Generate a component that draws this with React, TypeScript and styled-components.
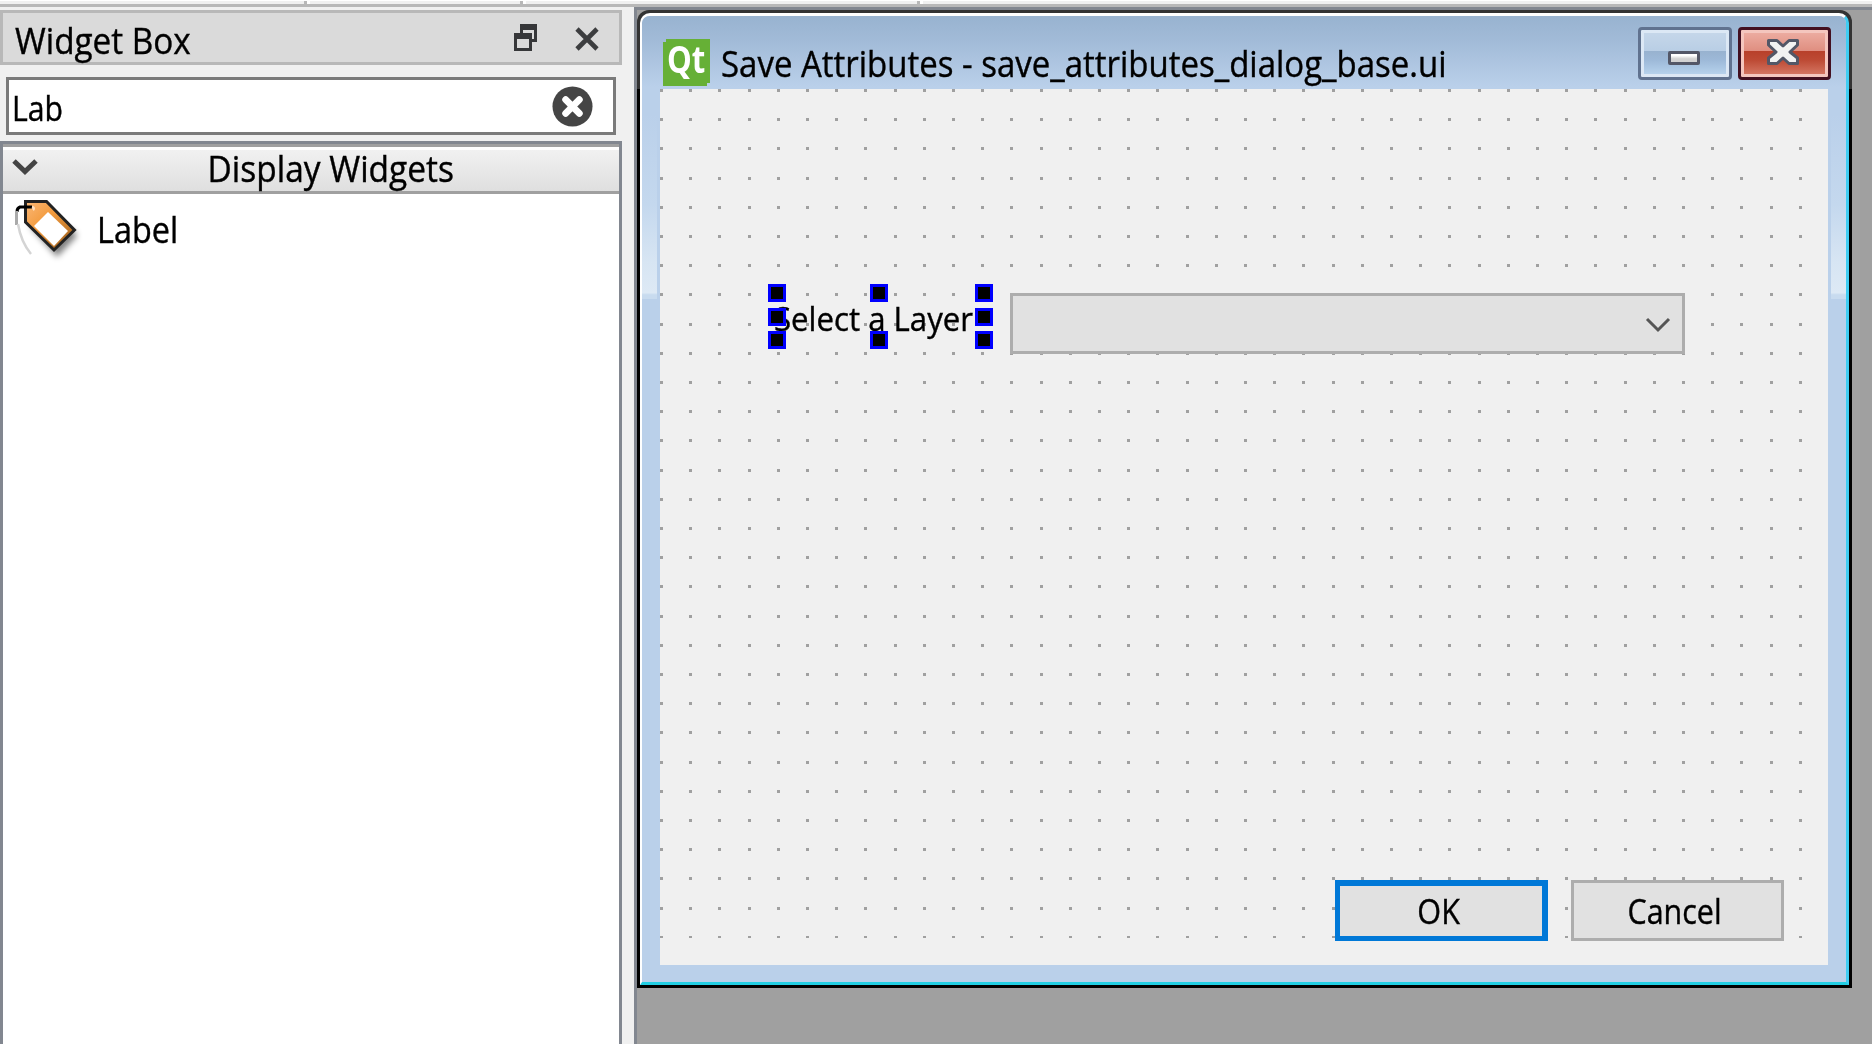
import React from 'react';
import styled, { createGlobalStyle } from 'styled-components';

const Global = createGlobalStyle`
  *, *::before, *::after { box-sizing: border-box; }
  html, body { margin: 0; padding: 0; overflow: hidden; }
  body { background: #f0f0f0; color: #000; font-family: "Open Sans", "Noto Sans", sans-serif; }
  svg { display: block; flex: none; }
`;

const Screen = styled.div`
  width: 1872px;
  height: 1044px;
  display: flex;
  flex-direction: column;
  overflow: hidden;
  background: #f0f0f0;
`;

const ToolbarEdge = styled.div`
  height: 7px;
  flex: none;
  display: flex;
  border-top: 1px solid #fff;
  border-bottom: 3px solid #b8b8b8;
`;

const ToolbarCell = styled.div<{ $w: number }>`
  width: ${(p) => p.$w}px;
  border-right: 3px solid #b8b8b8;
  box-shadow: 3px 0 0 #fff;
`;

const Body = styled.div`
  flex: 1;
  min-height: 0;
  display: flex;
  gap: 12px;
`;

const Dock = styled.aside`
  width: 622px;
  flex: none;
  display: flex;
  flex-direction: column;
  padding-top: 3px;
`;

const Text = styled.span<{ $size: number; $scale?: number; $origin?: string }>`
  display: block;
  white-space: nowrap;
  font-size: ${(p) => p.$size}px;
  line-height: 40px;
  -webkit-text-stroke: 0.4px #000;
  transform: scaleX(${(p) => p.$scale ?? 1});
  transform-origin: ${(p) => p.$origin ?? 'left'} center;
`;

const DockTitle = styled.div`
  height: 55px;
  flex: none;
  display: flex;
  align-items: flex-start;
  justify-content: space-between;
  border: 3px solid #b8b8b8;
  background: #dadada;
  padding: 8px 20px 0 12px;
`;

const DockActions = styled.div`
  display: flex;
  gap: 38px;
  padding-top: 3px;
`;

const Filter = styled.div`
  height: 58px;
  flex: none;
  margin: 12px 6px 6px;
  display: flex;
  align-items: flex-start;
  justify-content: space-between;
  border: 3px solid #7a7a7a;
  background: #fff;
  padding: 6px 20px 0 3px;
`;

const FilterText = styled.div`
  padding-top: 2px;
`;

const WidgetList = styled.div`
  flex: 1;
  display: flex;
  flex-direction: column;
  border: 3px solid #828790;
  border-bottom: 0;
  background: #fff;
`;

const Category = styled.div`
  height: 50px;
  flex: none;
  display: flex;
  align-items: flex-start;
  border-top: 3px solid #a0a0a0;
  border-bottom: 3px solid #a0a0a0;
  background: linear-gradient(#fff 3px, #f1f1f1 3px, #dfdfdf);
  padding: 0 165px 0 9px;
`;

const CategoryName = styled.div`
  flex: 1;
  display: flex;
  justify-content: flex-end;
  padding-top: 2px;
`;

const Item = styled.div`
  display: flex;
  align-items: flex-start;
  gap: 10px;
  padding: 6px 0 0 12px;
`;

const ItemName = styled.div`
  padding-top: 10px;
`;

const Workspace = styled.main`
  flex: 1;
  min-width: 0;
  border-top: 3px solid #828790;
  border-left: 3px solid #828790;
  background: #a0a0a0;
`;

const Window = styled.section`
  width: 1215px;
  height: 978px;
  display: flex;
  flex-direction: column;
  background: linear-gradient(#333 79px, #000 79px);
  border-radius: 12px 12px 0 0;
  padding: 3px;
`;

const Frame = styled.div`
  flex: 1;
  display: flex;
  flex-direction: column;
  overflow: hidden;
  border-radius: 10px 10px 0 0;
  background: #bad0ea;
  border-style: solid;
  border-width: 3px 3px 3px 2px;
  border-color: #fff #3fcdf3 #22cfe4 #fff;
`;

const TitleBar = styled.header`
  height: 73px;
  flex: none;
  display: flex;
  align-items: flex-start;
  background: linear-gradient(#98b3d0, #a2bbd8 35%, #bad0ea 97%);
`;

const Logo = styled.div`
  width: 47px;
  height: 47px;
  flex: none;
  margin: 23px 11px 0 21px;
  padding-left: 4px;
  background: #66b036;
  clip-path: polygon(3px 0, 100% 0, 100% 44px, 44px 44px, 44px 100%, 0 100%, 0 3px, 3px 3px);
  color: #fff;
  font: 700 38px/39px "Open Sans", sans-serif;
`;

const LogoText = styled.span`
  display: block;
  width: 60px;
  transform: scaleX(0.82);
  transform-origin: left center;
`;

const Caption = styled.div`
  flex: 1;
  padding-top: 28px;
`;

const CaptionButtons = styled.div`
  display: flex;
  gap: 6px;
  padding: 11px 15px 0 0;
`;

const CaptionButton = styled.div<{ $danger?: boolean }>`
  width: ${(p) => (p.$danger ? 93 : 94)}px;
  height: 53px;
  border: 3px solid ${(p) => (p.$danger ? '#431020' : '#60728f')};
  border-radius: 4px;
  box-shadow: inset 0 0 0 3px ${(p) => (p.$danger ? '#f4c6be' : '#dce8f5')};
  background: ${(p) =>
    p.$danger
      ? 'linear-gradient(#eeb0a5, #df8e80 21px, #b8402a 21px, #bd4a34 30px, #d87d6a)'
      : 'linear-gradient(#c7d8ea, #b9cee5 21px, #98b2cf 21px, #9db9d8 30px, #bbd7f0)'};
  display: flex;
  justify-content: center;
  padding-top: ${(p) => (p.$danger ? 9 : 21)}px;
  padding-right: ${(p) => (p.$danger ? 3 : 2)}px;
`;

const MinimizeGlyph = styled.div`
  width: 32px;
  height: 14px;
  border: 3px solid #535767;
  border-radius: 2px;
  background: linear-gradient(#fff 20%, #d2d2d2 60%);
`;

const WindowBody = styled.div`
  flex: 1;
  display: flex;
  justify-content: space-between;
  padding-bottom: 17px;
`;

const SideGlow = styled.div`
  width: 15px;
  height: 210px;
  background: linear-gradient(#bad0ea 12%, #c4d8ee 55%, #d7e5f3 82%, #dde9f5 97%, #c8dbef 98%);
`;

const Form = styled.div`
  width: 1168px;
  height: 876px;
  position: relative;
  background: #f0f0f0;
`;

const GridDots = styled.svg`
  position: absolute;
  inset: 0;
`;

const FormLayout = styled.div`
  position: relative;
  height: 100%;
  display: flex;
  flex-direction: column;
  justify-content: space-between;
  padding: 195px 44px 24px 108px;
`;

const LayerRow = styled.div`
  display: flex;
  gap: 17px;
  padding-top: 9px;
`;

const Selected = styled.div`
  position: relative;
  width: 225px;
  height: 65px;
  margin-top: -9px;
  padding: 15px 0 0 6px;
`;

const Handle = styled.i<{ $x: number; $y: number }>`
  position: absolute;
  left: ${(p) => p.$x}px;
  top: ${(p) => p.$y}px;
  width: 18px;
  height: 18px;
  border: 3px solid #00f;
  background: #000;
`;

const Combo = styled.div`
  width: 675px;
  height: 61px;
  border: 3px solid #adadad;
  background: #e1e1e1;
  display: flex;
  justify-content: flex-end;
  padding: 21px 10px 0 0;
`;

const ButtonRow = styled.div`
  display: flex;
  justify-content: flex-end;
  gap: 23px;
`;

const PushButton = styled.button<{ $primary?: boolean }>`
  width: 213px;
  height: 61px;
  margin: 0;
  padding: 0 5px 0 0;
  border-style: solid;
  border-color: ${(p) => (p.$primary ? '#0078d7' : '#adadad')};
  border-width: ${(p) => (p.$primary ? '6px 6px 5px 5px' : '3px')};
  background: #e1e1e1;
  color: #000;
  font-family: inherit;
  display: flex;
  align-items: center;
  justify-content: center;
`;

const STEP = 29.2;
const dots = Array.from({ length: 30 }, (_, r) =>
  Array.from({ length: 40 }, (_, c) => `M${Math.round(c * STEP)} ${Math.round(r * STEP)}h3v${r === 29 ? 2 : 3}h-3z`).join(''),
).join('');

const handles: [number, number][] = [
  [0, 0], [102, 0], [207, 0],
  [0, 24], [207, 24],
  [0, 47], [102, 47], [207, 47],
];

function RestoreIcon() {
  return (
    <svg width="23" height="27" shapeRendering="crispEdges">
      <path fill="#363739" d="M6 0h17v18h-5v-3h2V6H9v3H6z" />
      <path fill="#363739" fillRule="evenodd" d="M0 9h18v18H0zM3 15v9h12v-9z" />
    </svg>
  );
}

function CloseIcon() {
  return (
    <svg width="24" height="27" viewBox="0 -3 24 27">
      <path d="M2 2l20 20M22 2L2 22" stroke="#3c3d3f" strokeWidth="4.600" />
    </svg>
  );
}

function ClearIcon() {
  return (
    <svg width="41" height="41" viewBox="0 0 42 42">
      <circle cx="21" cy="21" r="20.500" fill="#454545" />
      <path d="M14 14l14 14M28 14L14 28" stroke="#fff" strokeWidth="7" strokeLinecap="round" />
    </svg>
  );
}

function LabelIcon() {
  return (
    <svg width="72" height="66" viewBox="0 0 72 66">
      <defs>
        <linearGradient id="tag" x1="0" y1="0" x2="1" y2="1">
          <stop offset="0" stopColor="#fbb877" />
          <stop offset="0.400" stopColor="#f29a3c" />
          <stop offset="0.700" stopColor="#c87d2c" />
          <stop offset="1" stopColor="#6b3c0c" />
        </linearGradient>
        <filter id="soft" x="-20%" y="-20%" width="150%" height="150%">
          <feGaussianBlur stdDeviation="3" />
        </filter>
      </defs>
      <path d="M14 25L42 57L62 36L58 30Z" fill="#000" opacity="0.500" filter="url(#soft)" />
      <path d="M10.500 1.500H31.500L59.500 30L39 50L10.500 22Z" fill="url(#tag)" stroke="#222" strokeWidth="3" />
      <path d="M33 12L53 31L39 46L19 26Z" fill="#fff" />
      <path d="M17 7H5Q2 8 2 12" fill="none" stroke="#000" strokeWidth="3" />
      <path d="M17 7Q20 8 18 10" fill="none" stroke="#ffe0c0" strokeWidth="2.500" />
      <path d="M1.500 11V25" fill="none" stroke="#aaa" strokeWidth="3" />
      <path d="M3 24Q6 42 16 54" fill="none" stroke="#d4d4d4" strokeWidth="2.500" />
    </svg>
  );
}

export default function App() {
  return (
    <>
      <Global />
      <Screen>
        <ToolbarEdge>
          <ToolbarCell $w={307} />
          <ToolbarCell $w={216} />
          <ToolbarCell $w={397} />
        </ToolbarEdge>
        <Body>
          <Dock>
            <DockTitle>
              <Text $size={36} $scale={0.925}>Widget Box</Text>
              <DockActions>
                <RestoreIcon />
                <CloseIcon />
              </DockActions>
            </DockTitle>
            <Filter>
              <FilterText>
                <Text $size={34} $scale={0.89}>Lab</Text>
              </FilterText>
              <ClearIcon />
            </Filter>
            <WidgetList>
              <Category>
                <svg width="27" height="29" viewBox="0 -11 27 29">
                  <path d="M2 3l11 10.500L24 3" fill="none" stroke="#444" strokeWidth="5" />
                </svg>
                <CategoryName>
                  <Text $size={36} $scale={0.93} $origin="right">Display Widgets</Text>
                </CategoryName>
              </Category>
              <Item>
                <LabelIcon />
                <ItemName>
                  <Text $size={36} $scale={0.9}>Label</Text>
                </ItemName>
              </Item>
            </WidgetList>
          </Dock>
          <Workspace>
            <Window>
              <Frame>
                <TitleBar>
                  <Logo>
                    <LogoText>Qt</LogoText>
                  </Logo>
                  <Caption>
                    <Text $size={36} $scale={0.916}>Save Attributes - save_attributes_dialog_base.ui</Text>
                  </Caption>
                  <CaptionButtons>
                    <CaptionButton>
                      <MinimizeGlyph />
                    </CaptionButton>
                    <CaptionButton $danger>
                      <svg width="32" height="26" viewBox="0 0 32 26">
                        <path
                          d="M1.500 1.500H10L16 7L22 1.500H30.500V6L23 13L30.500 19V24.500H22L16 19L10 24.500H1.500V19L9 13L1.500 6Z"
                          fill="#f2f2f2"
                          stroke="#535767"
                          strokeWidth="3"
                          strokeLinejoin="round"
                        />
                      </svg>
                    </CaptionButton>
                  </CaptionButtons>
                </TitleBar>
                <WindowBody>
                  <SideGlow />
                  <Form>
                    <GridDots width="1168" height="876" shapeRendering="crispEdges">
                      <path d={dots} fill="#a0a0a0" />
                    </GridDots>
                    <FormLayout>
                      <LayerRow>
                        <Selected>
                          <Text $size={33} $scale={0.945}>Select a Layer</Text>
                          {handles.map(([x, y]) => (
                            <Handle key={`${x}-${y}`} $x={x} $y={y} />
                          ))}
                        </Selected>
                        <Combo>
                          <svg width="28" height="18" viewBox="0 0 28 18">
                            <path d="M3 2l11 11L25 2" fill="none" stroke="#555" strokeWidth="3" />
                          </svg>
                        </Combo>
                      </LayerRow>
                      <ButtonRow>
                        <PushButton $primary>
                          <Text $size={34} $scale={0.9} $origin="center">OK</Text>
                        </PushButton>
                        <PushButton>
                          <Text $size={34} $scale={0.895} $origin="center">Cancel</Text>
                        </PushButton>
                      </ButtonRow>
                    </FormLayout>
                  </Form>
                  <SideGlow />
                </WindowBody>
              </Frame>
            </Window>
          </Workspace>
        </Body>
      </Screen>
    </>
  );
}
